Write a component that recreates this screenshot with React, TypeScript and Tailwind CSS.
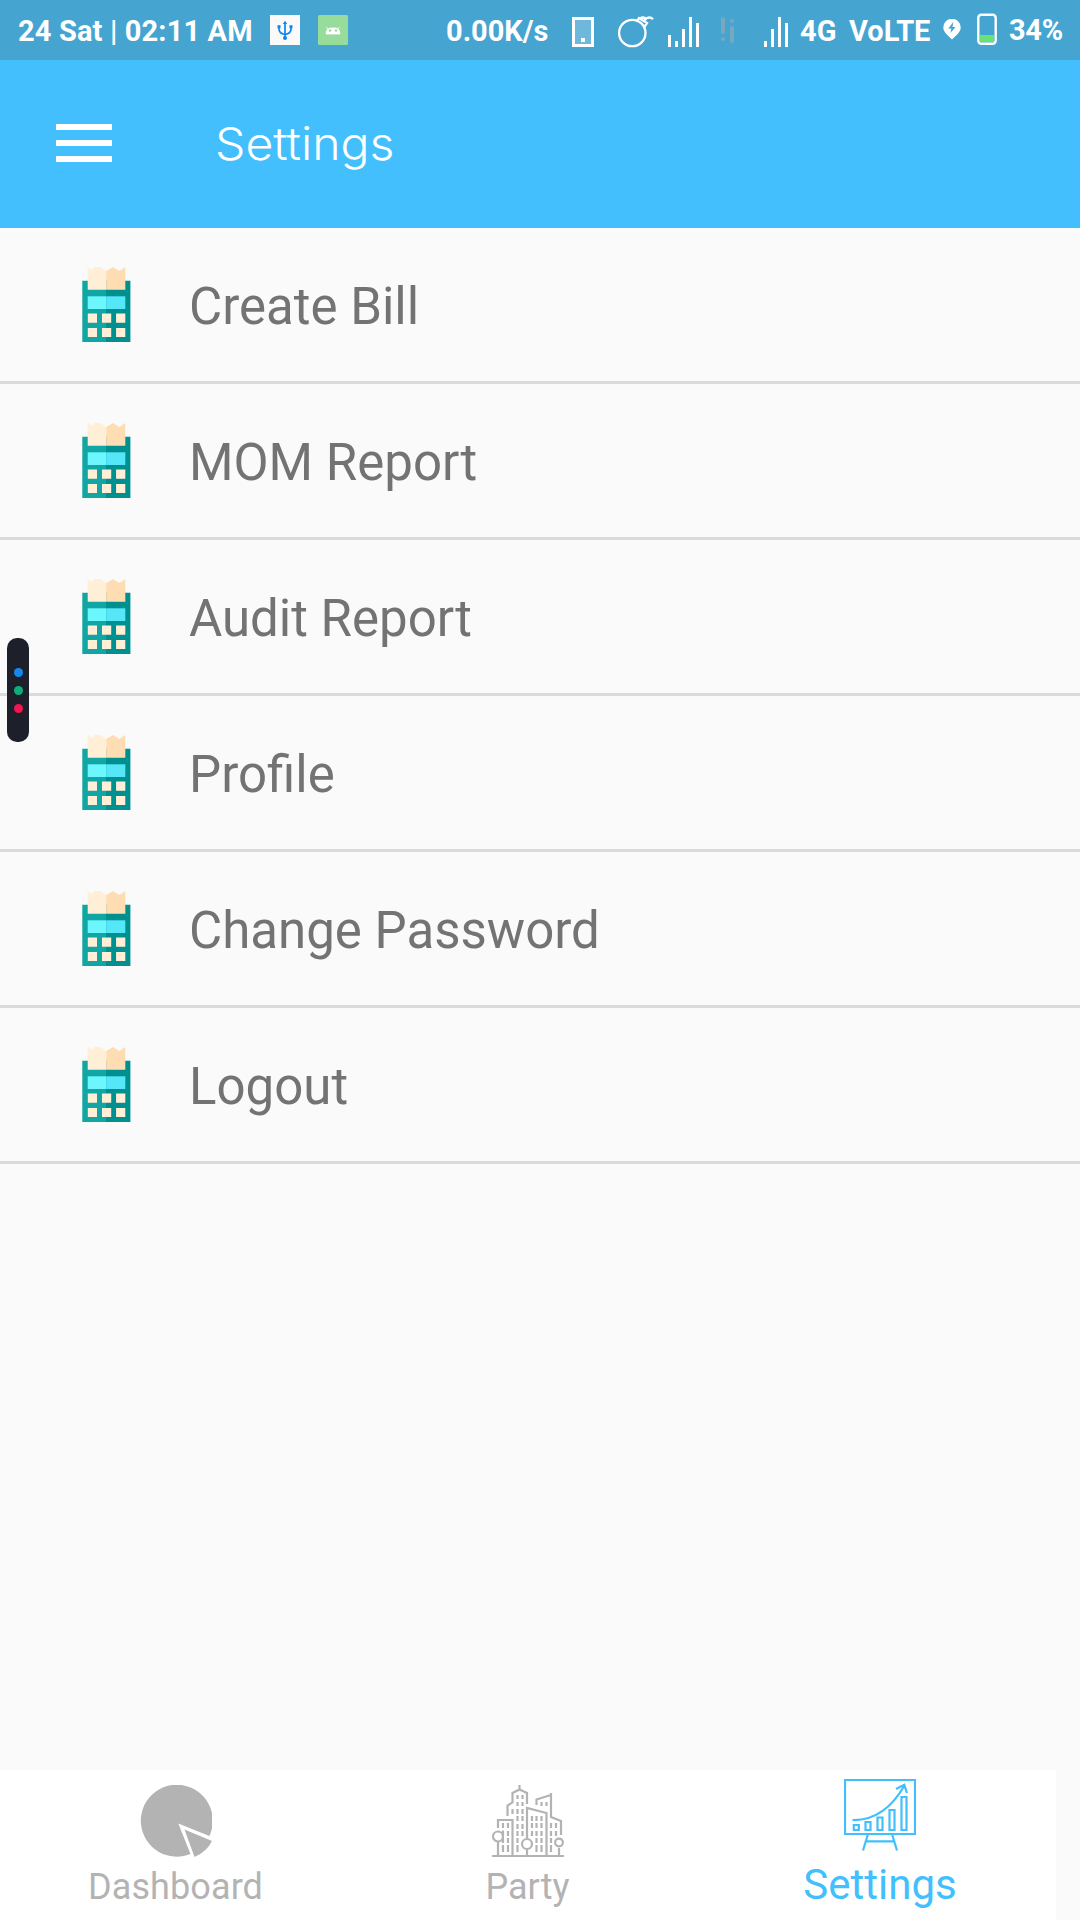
const menuItems = ["Create Bill", "MOM Report", "Audit Report", "Profile", "Change Password", "Logout"];

function CalculatorIcon() {
  return (
    <svg className="ml-[82px] h-[75px] w-[49px] shrink-0" viewBox="0 0 49 75">
      <path d="M.3 13.7H24.5V75H.3z" fill="#11a5a4" />
      <path d="M24 13.7H48.4V75H24z" fill="#009090" />
      <path d="M5.7 22.7V0L10 2.700 12.500 0 18.300 0 24.300 4V22.700z" fill="#ffefd7" />
      <path d="M24.2 22.7V4L31 0l6.3 4 6-4V22.7z" fill="#ffddb3" />
      <path d="M5.7 29.3H24.2V42H5.7z" fill="#6cf7ff" />
      <path d="M24.2 29.3H43.3V42H24.2z" fill="#55e6f8" />
      <path d="M5.8 46.6h9.2v9.2H5.8zM20 46.6h9.2v9.2H20zM34.1 46.6h9.2v9.2h-9.2zM5.8 60.9h9.2v9.2H5.8zM20 60.9h9.2v9.2H20zM34.1 60.9h9.2v9.2h-9.2z" fill="#ffefd7" />
    </svg>
  );
}

function StatusBar() {
  return (
    <div className="flex h-[60px] items-start bg-[#46a4d0] text-[29px] leading-[60px] font-bold whitespace-pre text-white">
      <span className="ml-[18px] w-[252px] pt-[1px] tracking-[0.15px]">24 Sat | 02:11 AM</span>
      <svg className="mt-[15px] h-[30px] w-[30px] shrink-0" viewBox="0 0 30 30">
        <path d="M0 0h30v30H0z" fill="#fafafa" />
        <path d="M15 8v15M9 11.500v2.500q0 4.500 6 5.500q6-1 6-5.500v-2.500" fill="none" stroke="#0a86f5" strokeWidth="1.700" />
        <path d="M12.800 9 15 5.800 17.200 9zM7.500 10.300h3v3h-3zM19.500 10.300h3v3h-3z" fill="#0a86f5" />
        <circle cx="15" cy="23" r="2" fill="#0a86f5" />
      </svg>
      <svg className="mt-[15px] ml-[18px] h-[30px] w-[30px] shrink-0" viewBox="0 0 30 30">
        <rect width="30" height="30" rx="1.500" fill="#98dc9b" />
        <path d="M8 19q0-5 4-6h6q4 1 4 6zM8.500 12l2.300 3M21.500 12l-2.300 3" fill="#fff" stroke="#fff" strokeWidth=".8" />
        <circle cx="12" cy="15.500" r="1.200" fill="#98dc9b" />
        <circle cx="18" cy="15.500" r="1.200" fill="#98dc9b" />
      </svg>
      <span className="ml-[98px] w-[126px] pt-[1px]">0.00K/s</span>
      <svg className="mt-[17px] h-[30px] w-[22px] shrink-0" viewBox="0 0 22 30">
        <path d="M1.500 1.500h19v27h-19z" fill="#6fb7db" stroke="#fff" strokeWidth="3" />
        <path d="M9 21h4v4H9z" fill="#fff" />
      </svg>
      <svg className="mt-[15px] ml-[23px] h-[33px] w-[37px] shrink-0" viewBox="0 0 37 33" fill="none" stroke="#fff" strokeWidth="2.300">
        <circle cx="15.300" cy="18" r="13.200" />
        <path d="M20.500 5.300 22 3l8 5-3 4.500M23 3.500q3-2 5.500 0l-1 3M28.500 4q4-3 7.500.2" />
      </svg>
      <svg className="mt-[17px] ml-[14px] h-[30px] w-[31px] shrink-0" viewBox="0 0 31 30" fill="#fff">
        <path d="M0 18h3v12H0zM7 24h3v6H7zM14 12h3v18h-3zM21 0h3v30h-3zM28 6h3v24h-3z" />
      </svg>
      <svg className="mt-[17px] ml-[22px] h-[26px] w-[14px] shrink-0" viewBox="0 0 14 26" stroke="#78a8be" strokeWidth="4" strokeLinecap="round">
        <path d="M2 2v13M2 22v.01M11 4v.01M11 11v13" />
      </svg>
      <svg className="mt-[17px] ml-[29px] h-[30px] w-[24px] shrink-0" viewBox="0 0 24 30" fill="#fff">
        <path d="M0 24h3v6H0zM7 12h3v18H7zM14 0h3v30h-3zM21 6h3v24h-3z" />
      </svg>
      <span className="ml-[12px] w-[49px] pt-[1px]">4G</span>
      <span className="w-[94px] pt-[1px]">VoLTE</span>
      <svg className="mt-[19px] h-[21px] w-[18px] shrink-0" viewBox="0 0 18 21">
        <path d="M9 20.500C5 16.500.3 13 .3 8.500a8.500 8.500 0 0 1 17.400 0C17.700 13 13 16.500 9 20.500z" fill="#fff" />
        <path d="M10.300 3 5.300 9.500h3L7.500 14l5-6h-3z" fill="#46a4d0" />
      </svg>
      <svg className="mt-[13px] ml-[16px] h-[33px] w-[20px] shrink-0" viewBox="0 0 20 33">
        <rect x="1.300" y="1.800" width="17.400" height="29" rx="3" fill="none" stroke="#fff" strokeWidth="2.400" />
        <path d="M3 22h14v7H3z" fill="#67e372" />
      </svg>
      <span className="ml-[12px] tracking-[-0.3px]">34%</span>
    </div>
  );
}

function PieIcon() {
  return (
    <svg className="h-[72px] w-[72px]" viewBox="0 0 72 72" fill="#b3b3b3">
      <path d="M38.300 38.500 69.400 51A36 36 0 1 0 50.500 69z" />
      <path d="M44.500 44.500 72 56Q67 66.500 54.500 72z" />
    </svg>
  );
}

function CityIcon() {
  return (
    <svg className="h-[72px] w-[72px]" viewBox="0 0 72 72" fill="none" stroke="#b3b3b3" strokeWidth="2.200">
      <path d="M0 71h72M6 43V35h14.500v36M6 57v14M15.500 31V20.500l5-3V8l7-3.500V0M27.500 4.500 35 8v11M35 53V23l19.500 5v43M44.500 20v-5.500L59 10V8M59 10v22l10 4v14M35 65v6M67 63v8" />
      <circle cx="6" cy="51.500" r="5" />
      <circle cx="35" cy="59" r="5" />
      <circle cx="67" cy="57.500" r="3.900" />
      <path d="M25.500 10v4m5-4v4M20.500 24v5m5-5v5m5-5v5M25.500 17v4m5-4v4M25.500 31v5m5-5v5M25.500 39v5m5-5v5M25.500 46v5m5-5v5M25.500 53v5M25.500 60v7M11 38v5m5-5v5M16 46v5M16 53v5M11 60v7m5-7v7M49.500 17v4m5-4v4M40 31v5m4.500-5v5m5-5v5M40 38v5m4.500-5v5m5-5v5M40 46v5m4.500-5v5m5-5v5M44.500 53v5m5-5v5M44.500 60v7m5-7v7M59 38v5m5-5v5M59 46v5m5-5v5M59 53v5M59 60v7" />
      <path d="M11 45.500v5M11 53v5" />
    </svg>
  );
}

function ChartIcon() {
  return (
    <svg className="h-[72px] w-[72px]" viewBox="0 0 72 72" fill="none" stroke="#42bffc" strokeWidth="2.200">
      <path d="M1 1h70v54H1zM24 55l-5 16.500M48 55l5 16.500M22 62.300h28" />
      <path d="M9.800 46h5v5h-5zM21.500 43h5v8h-5zM33.500 38.500h5V51h-5zM45.500 31h5v20h-5zM57.500 18h5v33h-5z" />
      <path d="M8.500 41Q40 42 60.500 6.500M52 10l8.300-4.200L63 14" />
    </svg>
  );
}

export default function App() {
  return (
    <div className="flex h-[1920px] w-[1080px] flex-col overflow-hidden bg-[#fafafa] font-['Roboto',sans-serif]">
      <StatusBar />
      <header className="flex h-[168px] items-start bg-[#42bffc] text-white">
        <div className="mt-[64px] ml-[56px] flex w-[56px] flex-col gap-[10px]">
          <div className="h-[6px] bg-white" />
          <div className="h-[6px] bg-white" />
          <div className="h-[6px] bg-white" />
        </div>
        <h1 className="mt-[54px] ml-[103px] origin-left scale-x-[1.07] font-['Inter',sans-serif] text-[45px] leading-[60px] font-light">Settings</h1>
      </header>
      <main className="relative flex-1">
        {menuItems.map((item) => (
          <div key={item} className="flex h-[156px] items-center border-b-[3px] border-[#dbdbdb] text-[51px] leading-[60px] text-[#737373]">
            <CalculatorIcon />
            <span className="ml-[58px] pt-[5px]">{item}</span>
          </div>
        ))}
        <div className="absolute top-[410px] left-[7px] flex h-[104px] w-[22px] flex-col items-center justify-center gap-[9px] rounded-[10px] bg-[#1d202b]">
          <span className="h-[9px] w-[9px] rounded-full bg-[#1687ef]" />
          <span className="h-[9px] w-[9px] rounded-full bg-[#0eae78]" />
          <span className="h-[9px] w-[9px] rounded-full bg-[#f01650]" />
        </div>
      </main>
      <nav className="grid h-[150px] w-[1056px] grid-cols-3 bg-white text-[36px] leading-[42px] text-[#b3b3b3]">
        <div className="flex flex-col items-center pt-[15px]">
          <PieIcon />
          <span className="mt-[9px] mr-[1px] tracking-[0.1px]">Dashboard</span>
        </div>
        <div className="flex flex-col items-center pt-[15px]">
          <CityIcon />
          <span className="mt-[9px] mr-[1px]">Party</span>
        </div>
        <div className="flex flex-col items-center pt-[9px] text-[#42bffc]">
          <ChartIcon />
          <span className="mt-[13px] text-[42px]">Settings</span>
        </div>
      </nav>
    </div>
  );
}
